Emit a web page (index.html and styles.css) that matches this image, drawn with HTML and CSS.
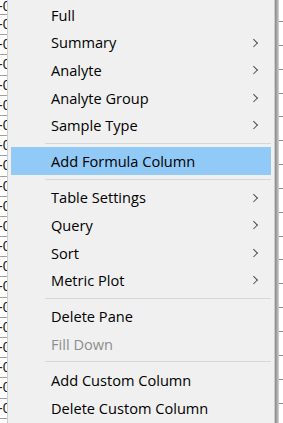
FILE: index.html
```html
<!DOCTYPE html>
<html>
<head>
<meta charset="utf-8">
<link rel="stylesheet" href="styles.css">
</head>
<body>
<div class="screen">
  <div class="grid-left">
    <div class="cell first">-0</div>
    <div class="cell">-0</div><div class="cell">-0</div><div class="cell">-0</div><div class="cell">-0</div>
    <div class="cell">-0</div><div class="cell">-0</div><div class="cell">-0</div><div class="cell">-0</div>
    <div class="cell">-0</div><div class="cell">-0</div><div class="cell">-0</div><div class="cell">-0</div>
    <div class="cell">-0</div><div class="cell">-0</div><div class="cell">-0</div><div class="cell">-0</div>
    <div class="cell">-0</div><div class="cell">-0</div><div class="cell">-0</div><div class="cell">-0</div>
    <div class="cell">-0</div>
  </div>
  <div class="menu">
    <div class="item">Full</div>
    <div class="item sub">Summary<span class="chev"></span></div>
    <div class="item sub">Analyte<span class="chev"></span></div>
    <div class="item sub">Analyte Group<span class="chev"></span></div>
    <div class="item sub">Sample Type<span class="chev"></span></div>
    <div class="sep"></div>
    <div class="item active">Add Formula Column</div>
    <div class="sep"></div>
    <div class="item sub">Table Settings<span class="chev"></span></div>
    <div class="item sub">Query<span class="chev"></span></div>
    <div class="item sub">Sort<span class="chev"></span></div>
    <div class="item sub">Metric Plot<span class="chev"></span></div>
    <div class="sep"></div>
    <div class="item">Delete Pane</div>
    <div class="item disabled">Fill Down</div>
    <div class="sep"></div>
    <div class="item">Add Custom Column</div>
    <div class="item">Delete Custom Column</div>
  </div>
  <div class="shadow"></div>
  <div class="grid-right">
    <div class="rcell first"></div>
    <div class="rcell"></div><div class="rcell"></div><div class="rcell"></div><div class="rcell"></div>
    <div class="rcell"></div><div class="rcell"></div><div class="rcell"></div><div class="rcell"></div>
    <div class="rcell"></div><div class="rcell"></div><div class="rcell"></div><div class="rcell"></div>
    <div class="rcell"></div><div class="rcell"></div><div class="rcell"></div><div class="rcell"></div>
    <div class="rcell"></div>
  </div>
</div>
</body>
</html>
```
FILE: styles.css
```css
html, body {
  margin: 0;
  padding: 0;
  background: #ffffff;
}
body {
  width: 283px;
  height: 423px;
  overflow: hidden;
  font-family: "Open Sans", "Noto Sans", "Liberation Sans", sans-serif;
}
.screen {
  display: flex;
  height: 423px;
  overflow: hidden;
}
.grid-left {
  width: 7px;
  flex: none;
  overflow: hidden;
  background: #ffffff;
}
.cell {
  height: 19.2px;
  border-bottom: 1px solid #a0a0a0;
  font-family: "Liberation Sans", sans-serif;
  font-size: 14px;
  line-height: 19px;
  color: #222222;
  white-space: nowrap;
  text-indent: -2px;
  overflow: hidden;
}
.cell.first {
  height: 14px;
  line-height: 12px;
}
.menu {
  width: 260px;
  flex: none;
  background: #f0f0f0;
  border-left: 1px solid #cdcdcd;
  border-right: 1px solid #cdcdcd;
  padding: 1px 3px 0 3px;
  box-sizing: content-box;
}
.item {
  height: 27.6px;
  display: flex;
  align-items: center;
  justify-content: space-between;
  padding: 0 15px 0 40px;
  font-size: 14.6px;
  color: #000000;
  white-space: nowrap;
}
.item.active {
  background: #91c9f7;
}
.item.disabled {
  color: #8d8d8d;
}
.chev {
  width: 4.5px;
  height: 4.5px;
  border-top: 1.4px solid #4a4a4a;
  border-right: 1.4px solid #4a4a4a;
  transform: rotate(45deg);
}
.sep {
  height: 1px;
  background: #d7d7d7;
  margin: 3.75px 0 3.75px 34px;
}
.shadow {
  width: 4px;
  flex: none;
  background: linear-gradient(to right, #8a8a8a, #a8a8a8 50%, #d8d8d8);
}
.grid-right {
  flex: 1;
  background: #ffffff;
}
.rcell {
  height: 22.85px;
  border-bottom: 1px solid #8c8c8c;
}
.rcell.first {
  height: 21px;
}
```
